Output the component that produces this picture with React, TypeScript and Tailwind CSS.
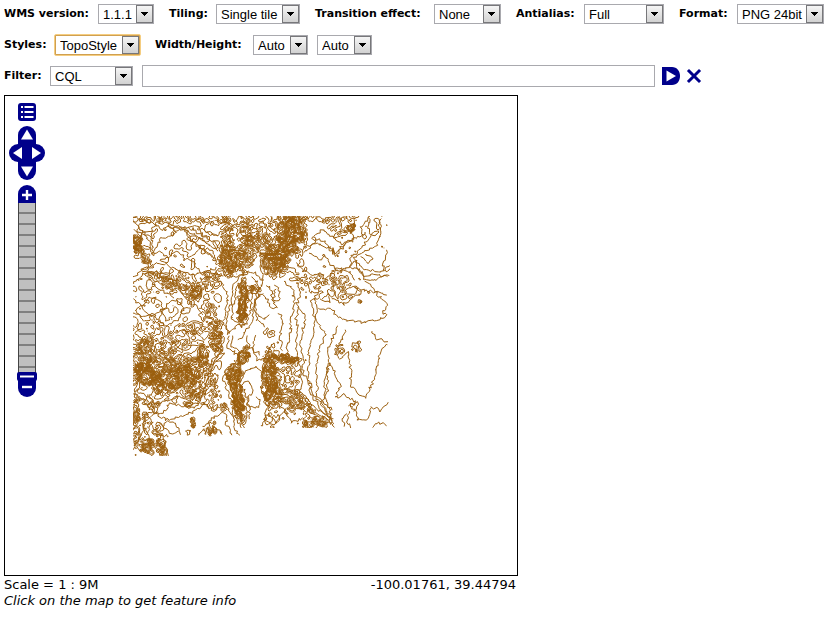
import React, { useId } from "react";

type Point = [number, number];
/** x, y, radius x, radius y, rotation in degrees, strength */
type Blob = [number, number, number, number, number, number];

const LEFT = 133;
const TOP = 216;
const WIDTH = 257;
const HEIGHT = 240;

/* Rough terrain: many small closed contours. */
const ROUGH: Blob[] = [
  [140, 250, 4, 17, -25, 9], [136, 242, 4, 8, 0, 5],
  [150, 219, 14, 3, 0, 2.5], [185, 219, 24, 3, 0, 2.5], [215, 220, 14, 4, 0, 2.5],
  [227, 230, 5, 16, 0, 6], [228, 255, 6, 16, 0, 7], [247, 227, 12, 11, 0, 5], [236, 262, 14, 11, 0, 7], [250, 247, 9, 12, 0, 6],
  [268, 226, 8, 13, 0, 2.2], [262, 240, 6, 8, 0, 2.5],
  [291, 228, 10, 15, 10, 13], [277, 260, 10, 14, 20, 13], [287, 245, 9, 9, 0, 8], [299, 240, 6, 13, 10, 6], [268, 250, 7, 8, 0, 4],
  [325, 219, 30, 3, 0, 3], [340, 229, 10, 6, 0, 3], [296, 270, 8, 9, 0, 2.2],
  [312, 280, 18, 3, 0, 2.5], [336, 280, 14, 8, 20, 2.6], [343, 291, 12, 8, 10, 2.2],
  [160, 279, 16, 5, 30, 3], [195, 291, 9, 8, 0, 7], [210, 281, 7, 9, 0, 4], [178, 281, 10, 8, 0, 3],
  [209, 313, 7, 14, 0, 3.2], [217, 325, 5, 4, 0, 7], [192, 329, 18, 5, 0, 4], [146, 294, 10, 8, 0, 1.6],
  [150, 326, 14, 7, 0, 2.2], [170, 343, 24, 9, 0, 3], [145, 353, 10, 14, 0, 5],
  [147, 372, 13, 8, 15, 10], [160, 384, 14, 8, 20, 8], [186, 378, 15, 14, 0, 8], [172, 363, 20, 10, 0, 5],
  [202, 358, 5, 11, 0, 9], [216, 342, 5, 9, 0, 10], [196, 393, 8, 5, 0, 5], [137, 380, 4, 12, 0, 4],
  [155, 405, 5, 8, -20, 4], [213, 386, 4, 12, 0, 4], [212, 405, 5, 4, 0, 4], [225, 407, 4, 3, 0, 5],
  [189, 404, 3, 3, 0, 9], [136, 427, 3, 24, 0, 6], [147, 446, 5, 8, 0, 9], [161, 446, 4, 10, -15, 7], [147, 418, 4, 8, 0, 3],
  [158, 430, 4, 7, 0, 4], [193, 422, 2, 4, 0, 14], [212, 428, 3, 8, 20, 6],
  [270, 374, 6, 18, 0, 12], [274, 396, 8, 10, -10, 10], [288, 359, 12, 3, 5, 12], [285, 382, 14, 19, 0, 3.8],
  [275, 348, 5, 8, 0, 3], [315, 423, 12, 5, -8, 9], [292, 403, 9, 9, 30, 4], [306, 408, 5, 12, -40, 4],
  [272, 418, 9, 9, 0, 2], [254, 289, 4, 4, 0, 8], [270, 333, 6, 4, 0, 3],
  [360, 302, 2, 2, 0, 9], [352, 228, 3, 3, 0, 9], [340, 349, 4, 5, 0, 4], [357, 348, 6, 5, 0, 2],
  [243, 303, 4, 18, 3, 12], [238, 396, 4, 24, -7, 13], [244, 357, 4, 9, 15, 12], [234, 376, 6, 7, 0, 12],
];

/* Smooth ridges: tightly nested contours. */
const RIDGES: Blob[] = [
  [243, 303, 3, 17, 3, 10], [237, 396, 3, 22, -7, 10], [244, 357, 3, 8, 15, 6],
  [233, 376, 5, 7, 0, 5], [213, 387, 4, 8, 0, 3], [147, 374, 11, 8, 20, 4],
  [196, 291, 6, 6, 0, 4], [275, 258, 9, 14, 20, 8], [291, 229, 10, 14, 0, 9],
];

/* Single contours that run across the flatter ground. */
const LINES: Point[][] = [
  [[133, 219], [140, 229], [152, 239], [153, 254], [158, 245], [161, 238], [176, 233], [168, 226], [186, 230], [192, 242], [205, 251], [222, 264]],
  [[133, 229], [146, 235], [150, 245], [153, 256], [160, 251], [168, 257], [176, 251], [186, 258], [194, 263], [202, 274], [217, 268]],
  [[184, 228], [196, 236], [207, 242], [219, 252]],
  [[182, 229], [192, 240], [203, 249], [213, 256]],
  [[188, 228], [201, 234], [214, 242], [222, 254]],
  [[134, 217], [152, 223], [162, 229], [172, 224], [180, 228], [197, 226], [208, 234], [219, 236]],
  [[133, 276], [145, 269], [157, 263], [168, 265], [180, 272], [192, 275], [206, 272], [222, 275]],
  [[133, 283], [143, 274], [156, 272], [168, 276], [177, 283], [186, 300], [196, 306], [203, 316]],
  [[148, 271], [158, 276], [170, 279], [180, 281]], [[148, 274], [157, 282], [167, 286], [175, 291]],
  [[149, 277], [156, 287], [165, 292], [173, 297]], [[152, 272], [162, 279], [174, 284]],
  [[133, 300], [141, 304], [149, 314], [159, 319], [166, 305], [177, 299], [184, 309], [177, 320], [167, 326], [158, 320]],
  [[135, 310], [144, 304], [151, 297], [160, 301], [163, 308], [154, 315], [142, 317], [135, 310]],
  [[222, 264], [225, 274], [237, 278], [247, 271], [256, 273], [263, 280]],
  [[213, 274], [223, 285], [228, 296], [225, 311], [223, 323], [229, 334]],
  [[240, 276], [234, 284], [232, 298], [228, 314], [225, 328], [228, 335], [237, 325], [246, 325]],
  [[247, 276], [237, 285], [234, 303], [231, 320], [237, 322], [247, 323], [251, 309], [252, 293]],
  [[252, 276], [258, 284], [259, 296], [253, 305], [252, 321], [245, 333], [239, 341]],
  [[262, 276], [263, 285], [258, 290], [255, 308], [257, 321], [265, 326]],
  [[267, 285], [272, 290], [272, 299], [277, 309], [270, 306], [263, 293], [256, 298], [254, 310], [262, 320], [269, 315]],
  [[262, 222], [267, 231], [264, 238], [271, 243]], [[272, 218], [270, 226], [277, 232], [274, 240]],
  [[274, 284], [279, 288], [279, 300], [273, 302], [275, 288]],
  [[284, 281], [293, 290], [294, 306], [292, 316], [290, 334], [287, 350], [285, 358]],
  [[279, 312], [283, 322], [280, 335], [282, 350]],
  [[299, 282], [300, 292], [297, 304], [305, 317], [303, 331], [301, 346], [304, 356], [303, 372], [309, 386], [313, 398], [322, 411], [332, 420]],
  [[299, 306], [296, 318], [298, 334], [295, 348], [299, 362], [302, 380], [300, 390]],
  [[306, 283], [311, 292], [319, 293], [311, 300], [314, 316], [315, 330], [309, 345], [309, 360], [308, 377], [313, 394], [325, 409], [333, 420]],
  [[322, 283], [314, 288], [323, 293], [315, 300], [317, 320], [326, 335], [319, 350], [316, 365], [317, 384], [317, 397], [327, 410], [331, 426]],
  [[338, 326], [333, 337], [328, 350], [329, 365], [325, 378], [325, 398], [331, 410]],
  [[345, 331], [341, 342], [336, 354], [341, 359], [347, 352], [351, 371], [350, 385], [357, 392], [367, 398], [374, 377], [378, 363], [381, 350], [387, 344]],
  [[329, 364], [336, 375], [340, 386], [335, 398], [345, 395], [355, 402], [350, 406], [357, 412], [358, 421], [368, 418], [371, 406], [381, 411], [387, 403]],
  [[329, 364], [327, 378], [328, 390], [324, 401], [330, 412], [333, 427]],
  [[346, 413], [342, 418], [346, 427]], [[350, 412], [347, 420], [351, 427]],
  [[373, 427], [376, 423], [384, 424], [386, 427]], [[349, 405], [358, 403], [354, 412]],
  [[304, 249], [319, 239], [326, 243], [336, 256], [347, 242], [362, 235], [361, 226], [369, 217]],
  [[304, 253], [315, 243], [328, 248], [335, 254], [347, 242]],
  [[314, 236], [323, 230], [331, 235], [341, 244], [354, 240], [351, 232], [355, 219]],
  [[370, 216], [369, 227], [370, 237], [363, 246], [351, 257], [350, 267], [356, 260], [364, 269], [383, 272], [384, 261], [387, 251]],
  [[380, 219], [382, 232], [377, 245], [365, 250], [354, 258], [356, 268], [365, 275], [389, 276]],
  [[388, 275], [377, 279], [366, 280], [359, 270], [350, 267], [338, 272], [330, 264], [326, 256], [319, 260], [309, 254]],
  [[297, 263], [304, 271], [312, 276], [320, 273], [327, 279], [337, 268], [350, 272], [356, 281]],
  [[366, 280], [373, 288], [379, 296], [388, 306], [382, 312], [386, 316], [374, 321], [362, 323], [348, 320], [337, 316], [331, 309], [319, 308]],
  [[333, 298], [343, 304], [353, 298], [362, 293], [354, 287], [369, 291], [386, 294]],
  [[321, 300], [331, 302], [327, 294], [323, 299]], [[360, 345], [357, 341], [352, 344], [358, 352]],
  [[387, 341], [378, 340], [374, 334], [371, 331]], [[364, 254], [372, 258], [368, 263], [362, 257]],
  [[133, 393], [145, 402], [154, 413], [166, 420], [180, 416], [194, 412], [204, 404], [214, 411], [225, 404], [233, 417], [235, 430], [240, 436]],
  [[133, 402], [143, 399], [150, 402], [155, 412], [163, 413], [171, 403], [183, 406], [195, 408], [202, 396], [208, 376], [216, 358], [225, 353]],
  [[148, 394], [155, 404], [166, 401], [175, 396], [190, 400], [199, 391], [207, 372], [213, 360], [221, 351], [224, 337]],
  [[206, 399], [205, 386], [210, 371], [215, 362], [224, 355]],
  [[229, 337], [228, 349], [237, 354], [240, 362], [228, 367], [222, 377], [228, 391], [232, 403], [234, 419]],
  [[232, 337], [232, 346], [241, 352], [234, 364], [224, 372], [231, 387], [235, 401], [236, 419]],
  [[247, 419], [246, 409], [241, 399], [241, 385], [248, 381], [253, 387], [252, 394], [247, 397], [248, 407], [258, 407], [261, 400], [256, 397]],
  [[250, 420], [249, 408], [245, 392], [239, 385], [246, 370], [257, 365], [262, 372], [262, 389], [268, 406], [264, 422]],
  [[255, 336], [253, 351], [257, 360], [266, 357], [271, 345]], [[246, 337], [250, 347], [261, 355]],
  [[147, 412], [152, 423], [146, 434], [143, 425], [147, 412]], [[150, 420], [158, 435], [170, 436]],
  [[163, 426], [168, 421], [177, 425], [180, 434]], [[160, 424], [172, 433], [180, 431]],
  [[185, 432], [188, 429], [191, 432], [188, 435], [185, 432]], [[198, 436], [203, 428], [205, 435]],
  [[210, 436], [214, 426], [223, 434]], [[204, 427], [215, 416], [225, 412], [227, 426], [233, 436]],
  [[290, 390], [298, 397], [307, 407], [319, 417]], [[293, 389], [302, 397], [311, 408], [325, 419]],
  [[296, 389], [303, 393], [313, 405], [329, 418]], [[262, 427], [268, 413], [276, 422], [284, 411], [292, 423], [302, 418]],
  [[133, 449], [141, 436], [143, 424], [148, 436], [154, 449], [163, 433], [168, 455]],
];

function hash(x: number, y: number) {
  const s = Math.sin(x * 127.1 + y * 311.7) * 43758.5453;
  return s - Math.floor(s);
}

function noise(x: number, y: number) {
  const ix = Math.floor(x);
  const iy = Math.floor(y);
  const u = x - ix;
  const v = y - iy;
  const su = u * u * (3 - 2 * u);
  const sv = v * v * (3 - 2 * v);
  const a = hash(ix, iy) * (1 - su) + hash(ix + 1, iy) * su;
  const b = hash(ix, iy + 1) * (1 - su) + hash(ix + 1, iy + 1) * su;
  return a * (1 - sv) + b * sv - 0.5;
}

function sumBlobs(blobs: Blob[], x: number, y: number) {
  let total = 0;
  for (const [cx, cy, rx, ry, rotation, strength] of blobs) {
    const t = (rotation * Math.PI) / 180;
    const dx = x - cx;
    const dy = y - cy;
    const px = (dx * Math.cos(t) + dy * Math.sin(t)) / rx;
    const py = (dy * Math.cos(t) - dx * Math.sin(t)) / ry;
    const d = px * px + py * py;
    if (d < 5) total += strength * Math.exp(-d * d * 0.6);
  }
  return total;
}

function ambient(x: number, y: number) {
  if (x < 222 && y < 405) return 0.85;
  if (x > 300 && y < 300) return 0.6;
  return 0.12;
}

function elevation(px: number, py: number) {
  const x = px + noise(px / 3, py / 3) * 4;
  const y = py + noise(px / 3 + 70, py / 3) * 4;
  const rough = Math.min(sumBlobs(ROUGH, x, y), 14) + ambient(px, py);
  const detail = noise(px / 4.5, py / 4.5) + noise(px / 2.3 + 40, py / 2.3) * 0.5;
  return 0.5 + rough * detail * 1.2 + sumBlobs(RIDGES, x, y) * 0.8 + noise(x / 19, y / 19) * 1.6 * ambient(px, py);
}

/** Marching squares over the elevation grid, one segment list for all levels. */
function traceContours() {
  const step = 1;
  const cols = Math.floor(WIDTH / step);
  const rows = Math.floor(HEIGHT / step);
  const grid: number[][] = [];
  for (let r = 0; r <= rows; r++) {
    const row: number[] = [];
    for (let c = 0; c <= cols; c++) row.push(elevation(LEFT + c * step, TOP + r * step));
    grid.push(row);
  }
  const parts: string[] = [];
  for (let r = 0; r < rows; r++) {
    for (let c = 0; c < cols; c++) {
      const v = [grid[r][c], grid[r][c + 1], grid[r + 1][c + 1], grid[r + 1][c]];
      const x = c * step;
      const y = r * step;
      const corners: Point[] = [[x, y], [x + step, y], [x + step, y + step], [x, y + step]];
      const low = Math.ceil(Math.min(...v));
      const high = Math.floor(Math.max(...v));
      for (let level = low; level <= high; level++) {
        const hits: string[] = [];
        for (let e = 0; e < 4; e++) {
          const f = (e + 1) % 4;
          if (v[e] < level !== v[f] < level) {
            const k = (level - v[e]) / (v[f] - v[e]);
            const hx = corners[e][0] + (corners[f][0] - corners[e][0]) * k;
            const hy = corners[e][1] + (corners[f][1] - corners[e][1]) * k;
            hits.push(hx.toFixed(1) + " " + hy.toFixed(1));
          }
        }
        for (let i = 0; i + 1 < hits.length; i += 2) parts.push("M" + hits[i] + "L" + hits[i + 1]);
      }
    }
  }
  return parts.join("");
}

function roughen(points: Point[], seed: number) {
  let d = "";
  for (let i = 0; i + 1 < points.length; i++) {
    const [x0, y0] = points[i];
    const [x1, y1] = points[i + 1];
    const n = Math.max(2, Math.round(Math.hypot(x1 - x0, y1 - y0) / 2));
    for (let k = i === 0 ? 0 : 1; k <= n; k++) {
      const t = k / n;
      const jx = (hash(seed + k, i * 3.1) - 0.5) * 3;
      const jy = (hash(i * 5.7, seed - k) - 0.5) * 3;
      const x = x0 + (x1 - x0) * t - LEFT + jx;
      const y = y0 + (y1 - y0) * t - TOP + jy;
      d += (d ? "L" : "M") + x.toFixed(1) + " " + y.toFixed(1);
    }
  }
  return d;
}

const CONTOURS = traceContours();
const TRACKS = LINES.map((line, i) => roughen(line, i * 13 + 7)).join("");

function TopoLayer() {
  return (
    <svg className="absolute left-32 top-[120px] h-60 w-[257px]" viewBox="0 0 257 240" role="img" aria-label="Elevation contours">
      <clipPath id="coverage">
        <path d="M0 0H257V212H107V221H36V240H0Z" />
      </clipPath>
      <g clipPath="url(#coverage)" fill="none" stroke="#9c6010">
        <path d={CONTOURS} strokeWidth="1" />
        <path d={TRACKS} strokeWidth="1" />
      </g>
    </svg>
  );
}

type PickerProps = {
  label: string;
  options: string[];
  width: string;
  labelWidth?: string;
  hideLabel?: boolean;
  active?: boolean;
};

function Picker({ label, options, width, labelWidth = "", hideLabel = false, active = false }: PickerProps) {
  const id = useId();
  return (
    <div className="flex shrink-0 items-center">
      {!hideLabel && (
        <label htmlFor={id} className={`${labelWidth} mr-[7px] whitespace-nowrap text-[11px] font-bold leading-4`}>
          {label}
        </label>
      )}
      <div className={`relative h-5 ${width} ${active ? "rounded-[1px] outline-1 outline-[#f5cd80]" : ""}`}>
        <select
          id={id}
          aria-label={hideLabel ? label : undefined}
          className={`block h-5 w-full appearance-none rounded-none border bg-white pl-1 pr-[18px] pt-px font-['Liberation_Sans',Arial,sans-serif] text-[13px] leading-4 text-black outline-none ${active ? "border-[#d0a050]" : "border-[#a9a9ae]"}`}
        >
          {options.map((option) => (
            <option key={option}>{option}</option>
          ))}
        </select>
        <span className="pointer-events-none absolute right-px top-px flex h-[18px] w-[17px] items-center justify-center border border-[#77777a] bg-linear-to-b from-[#f5f5f5] to-[#d2d2d2]">
          <svg className="h-1 w-[7px]" viewBox="0 0 7 4" shapeRendering="crispEdges">
            <path d="M0 0h7v1h-1v1h-1v1h-1v1h-1v-1h-1v-1h-1v-1h-1z" />
          </svg>
        </span>
      </div>
    </div>
  );
}

const PAN_BUTTONS = {
  up: { name: "Pan north", round: "rounded-t-full", arrow: "M9 3.5L15 13.5H3Z" },
  left: { name: "Pan west", round: "rounded-l-full", arrow: "M4 9L13 3V15Z" },
  right: { name: "Pan east", round: "rounded-r-full", arrow: "M14 9L5 3V15Z" },
  down: { name: "Pan south", round: "rounded-b-full", arrow: "M9 14.5L15 4.5H3Z" },
};

function PanButton({ to }: { to: keyof typeof PAN_BUTTONS }) {
  const { name, round, arrow } = PAN_BUTTONS[to];
  return (
    <button type="button" aria-label={name} className={`block size-[18px] bg-[#00008b] ${round}`}>
      <svg viewBox="0 0 18 18" className="size-[18px]">
        <path d={arrow} fill="#fff" />
      </svg>
    </button>
  );
}

function MapControls() {
  return (
    <div className="absolute left-1 top-[7px] flex w-9 flex-col items-center">
      <button type="button" aria-label="Toggle options" className="block size-[18px]">
        <svg viewBox="0 0 18 18" className="size-[18px]">
          <rect width="18" height="18" rx="3" fill="#00008b" />
          <path d="M3 4h2M3 9h2M3 14h2M6.500 4h9M6.500 9h9M6.500 14h9" stroke="#fff" strokeWidth="2" />
        </svg>
      </button>
      <div className="mt-[5px] flex flex-col items-center">
        <PanButton to="up" />
        <div className="flex">
          <PanButton to="left" />
          <PanButton to="right" />
        </div>
        <PanButton to="down" />
      </div>
      <button type="button" aria-label="Zoom in" className="mt-[5px] block size-[18px] rounded-t-full bg-[#00008b]">
        <svg viewBox="0 0 18 18" className="size-[18px]">
          <path d="M4 10H14M9 5V15" stroke="#fff" strokeWidth="2.400" />
        </svg>
      </button>
      <div className="relative h-44 w-[18px] border-x border-[#444] bg-[repeating-linear-gradient(to_bottom,#c0c0c0_0,#c0c0c0_9px,#808080_9px,#808080_11px)]">
        <input
          type="range"
          aria-label="Zoom level"
          min={0}
          max={15}
          defaultValue={0}
          className="absolute inset-0 m-0 h-full w-4 opacity-0 [direction:rtl] [writing-mode:vertical-lr]"
        />
        <svg viewBox="0 0 20 9" className="pointer-events-none absolute -bottom-0.5 -left-0.5 z-10 h-[9px] w-5 max-w-none">
          <rect width="20" height="9" rx="2" fill="#00008b" />
          <path d="M3 4.500H17" stroke="#fff" strokeWidth="2" />
        </svg>
      </div>
      <button type="button" aria-label="Zoom out" className="block size-[18px] rounded-b-full bg-[#00008b]">
        <svg viewBox="0 0 18 18" className="size-[18px]">
          <path d="M4 8H14" stroke="#fff" strokeWidth="2.400" />
        </svg>
      </button>
    </div>
  );
}

export default function App() {
  return (
    <main className="min-h-screen bg-white p-1 font-['DejaVu_Sans',Verdana,sans-serif] text-[13px] leading-4 text-black">
      <form onSubmit={(event) => event.preventDefault()}>
        <div className="flex h-5 items-center gap-[15px]">
          <Picker label="WMS version:" labelWidth="w-[87px]" options={["1.1.1", "1.3.0"]} width="w-14" />
          <Picker label="Tiling:" labelWidth="w-10" options={["Single tile", "Tiled"]} width="w-[84px]" />
          <Picker label="Transition effect:" labelWidth="w-[112px]" options={["None", "Resize"]} width="w-[67px]" />
          <Picker label="Antialias:" labelWidth="w-[61px]" options={["Full", "Text only", "Disabled"]} width="w-20" />
          <Picker label="Format:" labelWidth="w-[51px]" options={["PNG 24bit", "PNG 8bit", "GIF", "JPEG"]} width="w-[87px]" />
        </div>
        <div className="mt-[11px] flex h-5 items-center gap-[15px]">
          <Picker label="Styles:" labelWidth="w-11" options={["TopoStyle", "Default"]} width="w-[85px]" active />
          <div className="flex gap-[9px]">
            <Picker label="Width/Height:" labelWidth="w-[91px]" options={["Auto", "600", "750"]} width="w-[55px]" />
            <Picker label="Height" options={["Auto", "300", "400"]} width="w-[55px]" hideLabel />
          </div>
        </div>
        <div className="mt-[10px] flex h-[22px] items-center">
          <Picker label="Filter:" labelWidth="w-[39px]" options={["CQL", "OGC", "FeatureID"]} width="w-[83px]" />
          <input
            type="text"
            aria-label="Filter expression"
            className="ml-[9px] h-[22px] min-w-0 max-w-[513px] grow border border-[#a9a9ae] bg-white px-1 font-['Liberation_Sans',Arial,sans-serif] outline-none"
          />
          <button type="submit" aria-label="Apply filter" className="ml-[7px] size-[18px]">
            <svg viewBox="0 0 18 18" className="size-[18px]">
              <path d="M0 0H10C15 0 18 4 18 9S15 18 10 18H0Z" fill="#00008b" />
              <path d="M4.500 3.500L14 9L4.500 14.500Z" fill="#fff" />
            </svg>
          </button>
          <button type="reset" aria-label="Reset filter" className="ml-[5px] size-[18px]">
            <svg viewBox="0 0 18 18" className="size-[18px]">
              <path d="M4 4L14 14M14 4L4 14" stroke="#00008b" strokeWidth="3" strokeLinecap="square" />
            </svg>
          </button>
        </div>
      </form>

      <section className="mt-2 w-[514px] max-w-full">
        <div className="relative h-[481px] overflow-hidden border border-black bg-white">
          <TopoLayer />
          <MapControls />
        </div>
        <div className="mt-px flex justify-between pr-0.5">
          <span>Scale = 1 : 9M</span>
          <span>-100.01761, 39.44794</span>
        </div>
        <p className="italic">Click on the map to get feature info</p>
      </section>
    </main>
  );
}
